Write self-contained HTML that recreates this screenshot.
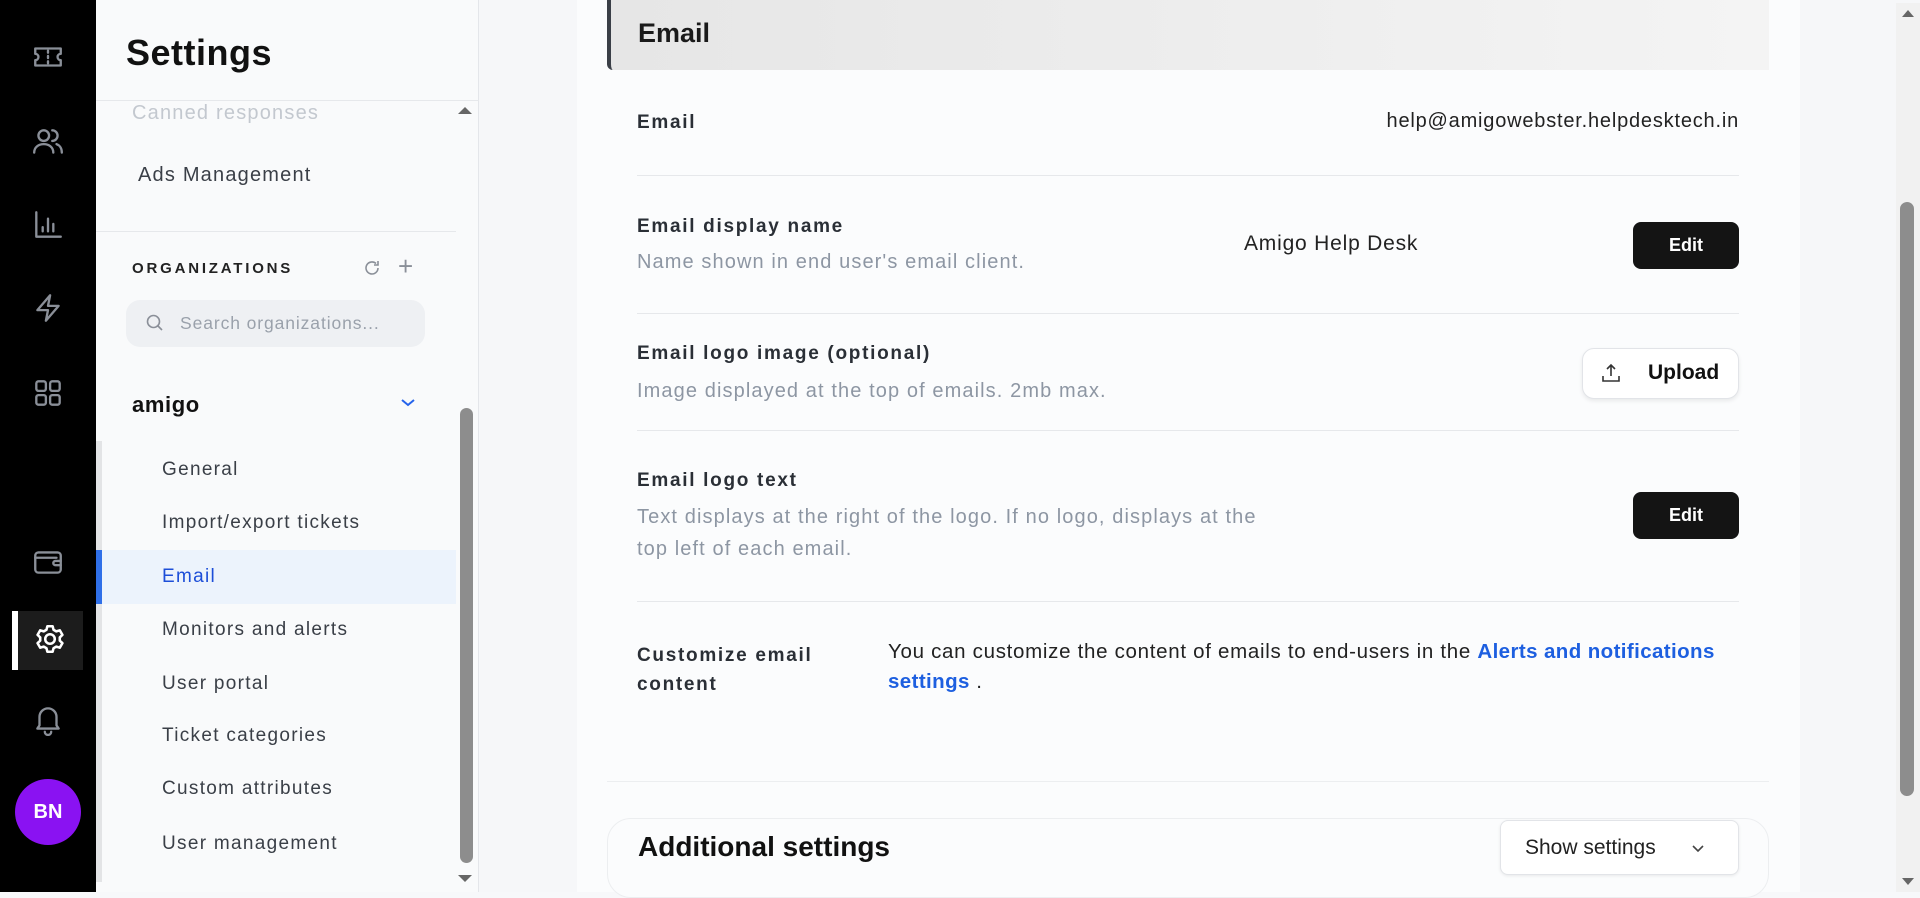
<!DOCTYPE html>
<html><head><meta charset="utf-8"><style>
*{box-sizing:border-box;margin:0;padding:0}
body{width:1920px;height:892px;overflow:hidden;font-family:"Liberation Sans",sans-serif;background:#f7f8fa;position:relative;color:#1a1a1a}
.abs{position:absolute}
.rail{left:0;top:0;width:96px;height:892px;background:#000}
.rail svg{position:absolute;left:31px;width:34px;height:34px;fill:none;stroke:#8a8f98;stroke-width:2.2;stroke-linecap:round;stroke-linejoin:round}
.side{left:96px;top:0;width:383px;height:892px;background:#f9fafb;border-right:1px solid #e4e6ea}
.item{position:absolute;left:162px;font-size:19px;color:#3a3f47;letter-spacing:1.3px}
.main{left:479px;top:0;width:1441px;height:892px;background:#f6f7f9}
.card{left:577px;top:0;width:1223px;height:892px;background:#fbfcfd}
.lbl{position:absolute;left:637px;font-size:19px;font-weight:bold;color:#2a2f36;letter-spacing:1.7px}
.desc{position:absolute;left:637px;font-size:20px;color:#8d96a3;line-height:32px;letter-spacing:1.1px}
.hr{position:absolute;left:637px;width:1102px;height:1px;background:#e6e8eb}
.btn{position:absolute;left:1633px;width:106px;height:47px;background:#141414;color:#fff;border-radius:8px;font-size:18px;font-weight:bold;display:flex;align-items:center;justify-content:center}
</style></head><body>
<div class="abs" style="left:0;top:0;width:1920px;height:3px;background:#444"></div>
<div class="abs rail">
<svg style="top:40px" viewBox="0 0 32 32"><path d="M4 8h24v5a3 3 0 0 0 0 6v5H4v-5a3 3 0 0 0 0-6z"/><path d="M16 10v2M16 15v2M16 20v2"/></svg>
<svg style="top:125px" viewBox="0 0 32 32"><circle cx="12" cy="10" r="5"/><path d="M3 26c0-5 4-8 9-8s9 3 9 8"/><path d="M20 5a5 5 0 0 1 0 10M24 18c3 1 5 4 5 8"/></svg>
<svg style="top:208px" viewBox="0 0 32 32"><path d="M5 4v23h23M11 22v-4M16 22V10M21 22v-7"/></svg>
<svg style="top:291px" viewBox="0 0 32 32"><path d="M18 4L6 18h10l-2 10 12-14H16z"/></svg>
<svg style="top:376px" viewBox="0 0 32 32"><rect x="5" y="5" width="9" height="9" rx="2"/><rect x="18" y="5" width="9" height="9" rx="2"/><rect x="5" y="18" width="9" height="9" rx="2"/><rect x="18" y="18" width="9" height="9" rx="2"/></svg>
<svg style="top:545px" viewBox="0 0 32 32"><rect x="4" y="7" width="24" height="19" rx="3"/><path d="M4 12h20M28 15h-5a2 2 0 0 0 0 4h5"/></svg>
<div class="abs" style="left:12px;top:611px;width:6px;height:59px;background:#fff"></div>
<div class="abs" style="left:18px;top:611px;width:65px;height:59px;background:#1c1c1c"></div>
<svg style="top:622px;left:33px;stroke:#fff;stroke-width:2.4" viewBox="0 0 32 32"><circle cx="16" cy="16" r="4.5"/><path d="M13.5 4h5l.8 3.3 2.6 1.5 3.3-1 2.5 4.3-2.5 2.4v3l2.5 2.4-2.5 4.3-3.3-1-2.6 1.5-.8 3.3h-5l-.8-3.3-2.6-1.5-3.3 1-2.5-4.3 2.5-2.4v-3L4.3 12.1l2.5-4.3 3.3 1 2.6-1.5z"/></svg>
<svg style="top:702px" viewBox="0 0 32 32"><path d="M8 22V14a8 8 0 0 1 16 0v8l2 3H6zM13 28a3 3 0 0 0 6 0"/></svg>
<div class="abs" style="left:15px;top:779px;width:66px;height:66px;border-radius:50%;background:#8a12f2;color:#fff;font-weight:bold;font-size:20px;display:flex;align-items:center;justify-content:center">BN</div>
</div>
<div class="abs side">
<div class="abs" style="left:30px;top:32px;font-size:36px;font-weight:bold;color:#111;letter-spacing:.5px">Settings</div>
<div class="abs" style="left:0;top:100px;width:383px;height:1px;background:#e6e8eb"></div>
<div class="abs" style="left:36px;top:102px;font-size:20px;color:#c3c8cf;letter-spacing:1.2px">Canned responses</div>
<div class="abs" style="left:42px;top:164px;font-size:20px;color:#3a3f47;letter-spacing:1.2px">Ads Management</div>
<div class="abs" style="left:0;top:231px;width:360px;height:1px;background:#e6e8eb"></div>
<div class="abs" style="left:36px;top:260px;font-size:15px;font-weight:bold;letter-spacing:2.8px;color:#222">ORGANIZATIONS</div>
<svg class="abs" style="left:266px;top:258px" width="20" height="20" viewBox="0 0 20 20" fill="none" stroke="#8a8f98" stroke-width="1.6"><path d="M16 10a6 6 0 1 1-2-4.5M16 3v4h-4"/></svg>
<div class="abs" style="left:302px;top:251px;font-size:26px;color:#8a8f98;font-weight:300">+</div>
<div class="abs" style="left:30px;top:300px;width:299px;height:47px;border-radius:14px;background:#eef0f3"></div>
<svg class="abs" style="left:49px;top:313px" width="20" height="20" viewBox="0 0 20 20" fill="none" stroke="#8a8f98" stroke-width="1.6"><circle cx="8.5" cy="8.5" r="6"/><path d="M13 13l4 4"/></svg>
<div class="abs" style="left:84px;top:313px;font-size:17.5px;color:#9aa1ab;letter-spacing:.9px">Search organizations...</div>
<div class="abs" style="left:36px;top:392px;font-size:22px;font-weight:bold;color:#111;letter-spacing:.6px">amigo</div>
<svg class="abs" style="left:302px;top:396px" width="20" height="14" viewBox="0 0 20 14" fill="none" stroke="#2563eb" stroke-width="2"><path d="M4 4l6 5 6-5"/></svg>
<div class="abs" style="left:0;top:441px;width:6px;height:441px;background:#e3e4e6"></div>
<div class="abs" style="left:0;top:550px;width:360px;height:54px;background:#ecf3fc"></div>
<div class="abs" style="left:0;top:550px;width:6px;height:54px;background:#2f6fe8"></div>
<div class="abs" style="left:364px;top:408px;width:13px;height:455px;border-radius:7px;background:#8d8d8d"></div>
<div class="abs" style="left:362px;top:107px;width:0;height:0;border-left:7px solid transparent;border-right:7px solid transparent;border-bottom:7px solid #666"></div>
<div class="abs" style="left:362px;top:875px;width:0;height:0;border-left:7px solid transparent;border-right:7px solid transparent;border-top:7px solid #666"></div>
</div>
<div class="item" style="top:459px">General</div>
<div class="item" style="top:512px">Import/export tickets</div>
<div class="item" style="top:566px;color:#1d4ed8">Email</div>
<div class="item" style="top:619px">Monitors and alerts</div>
<div class="item" style="top:673px">User portal</div>
<div class="item" style="top:725px">Ticket categories</div>
<div class="item" style="top:778px">Custom attributes</div>
<div class="item" style="top:833px">User management</div>

<div class="abs main"></div>
<div class="abs card"></div>
<div class="abs" style="left:607px;top:0;width:1162px;height:70px;background:linear-gradient(90deg,#e6e6e6,#f4f4f4);border-left:4px solid #3a3f47;border-bottom-left-radius:6px"></div>
<div class="abs" style="left:638px;top:18px;font-size:27px;font-weight:bold;color:#1a1a1a">Email</div>
<div class="lbl" style="top:112px">Email</div>
<div class="abs" style="right:181px;top:110px;font-size:20px;color:#222;letter-spacing:.8px">help@amigowebster.helpdesktech.in</div>
<div class="hr" style="top:175px"></div>
<div class="lbl" style="top:216px">Email display name</div>
<div class="desc" style="top:246px">Name shown in end user's email client.</div>
<div class="abs" style="left:1244px;top:232px;font-size:21px;color:#222;letter-spacing:.8px">Amigo Help Desk</div>
<div class="btn" style="top:222px">Edit</div>
<div class="hr" style="top:313px"></div>
<div class="lbl" style="top:343px">Email logo image (optional)</div>
<div class="desc" style="top:375px">Image displayed at the top of emails. 2mb max.</div>
<div class="abs" style="left:1582px;top:348px;width:157px;height:51px;border-radius:12px;background:#fff;border:1px solid #e2e4e8;box-shadow:0 2px 4px rgba(0,0,0,.08)"></div>
<svg class="abs" style="left:1600px;top:362px" width="22" height="22" viewBox="0 0 22 22" fill="none" stroke="#333" stroke-width="1.6"><path d="M11 14V3M7 7l4-4 4 4M3 14v5h16v-5"/></svg>
<div class="abs" style="left:1648px;top:361px;font-size:21px;font-weight:bold;color:#111">Upload</div>
<div class="hr" style="top:430px"></div>
<div class="lbl" style="top:470px">Email logo text</div>
<div class="desc" style="top:501px">Text displays at the right of the logo. If no logo, displays at the<br>top left of each email.</div>
<div class="btn" style="top:492px">Edit</div>
<div class="hr" style="top:601px"></div>
<div class="lbl" style="top:641px;line-height:29px">Customize email<br>content</div>
<div class="abs" style="left:888px;top:637px;font-size:20.5px;color:#222;line-height:30px;width:855px;letter-spacing:.7px">You can customize the content of emails to end-users in the <b style="color:#1d5fe0;letter-spacing:.4px">Alerts and notifications settings</b> .</div>
<div class="abs" style="left:607px;top:781px;width:1162px;height:1px;background:#eceef0"></div>
<div class="abs" style="left:607px;top:818px;width:1162px;height:80px;border:1px solid #eceef0;border-radius:24px;background:#fbfcfd"></div>
<div class="abs" style="left:638px;top:831px;font-size:28px;font-weight:bold;color:#111">Additional settings</div>
<div class="abs" style="left:1500px;top:820px;width:239px;height:55px;border-radius:8px;background:#fff;border:1px solid #e2e4e8;box-shadow:0 1px 3px rgba(0,0,0,.08)"></div>
<div class="abs" style="left:1525px;top:836px;font-size:21px;color:#222">Show settings</div>
<svg class="abs" style="left:1690px;top:842px" width="16" height="14" viewBox="0 0 16 14" fill="none" stroke="#444" stroke-width="1.6"><path d="M3 4l5 5 5-5"/></svg>
<div class="abs" style="left:1896px;top:3px;width:24px;height:889px;background:#f1f1f1"></div>
<div class="abs" style="left:1900px;top:202px;width:14px;height:594px;border-radius:7px;background:#8d8d8d"></div>
<div class="abs" style="left:1902px;top:10px;border-left:6px solid transparent;border-right:6px solid transparent;border-bottom:7px solid #666"></div>
<div class="abs" style="left:1902px;top:878px;border-left:6px solid transparent;border-right:6px solid transparent;border-top:7px solid #666"></div>
</body></html>
